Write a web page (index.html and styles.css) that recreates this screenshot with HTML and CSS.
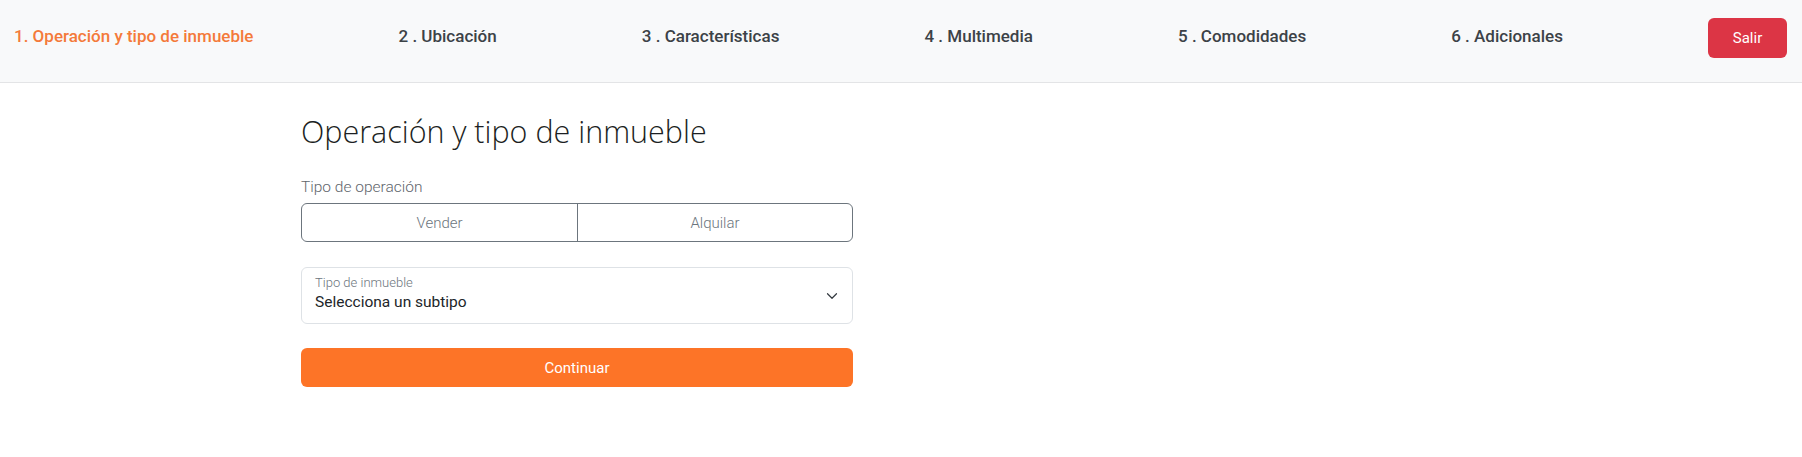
FILE: index.html
```html
<!DOCTYPE html>
<html lang="es">
<head>
<meta charset="utf-8">
<title>Publicar inmueble</title>
<link rel="stylesheet" href="styles.css">
</head>
<body>
<header class="steps">
  <span class="step active">1. Operación y tipo de inmueble</span>
  <span class="step">2 . Ubicación</span>
  <span class="step">3 . Características</span>
  <span class="step">4 . Multimedia</span>
  <span class="step">5 . Comodidades</span>
  <span class="step">6 . Adicionales</span>
  <button class="exit">Salir</button>
</header>
<main class="content">
  <h1 class="title">Operación y tipo de inmueble</h1>
  <div class="field-label">Tipo de operación</div>
  <div class="toggle">
    <span class="toggle-opt">Vender</span>
    <span class="toggle-opt">Alquilar</span>
  </div>
  <div class="select">
    <div class="select-text">
      <span class="select-label">Tipo de inmueble</span>
      <span class="select-value">Selecciona un subtipo</span>
    </div>
    <svg class="chevron" width="16" height="12" viewBox="0 0 16 16"><path d="m2 5 6 6 6-6" fill="none" stroke="#343a40" stroke-width="1.6" stroke-linecap="round" stroke-linejoin="round"/></svg>
  </div>
  <button class="continue">Continuar</button>
</main>
</body>
</html>
```
FILE: styles.css
```css
* { box-sizing: border-box; }
body {
  margin: 0;
  background: #fff;
  font-family: Roboto, "Liberation Sans", sans-serif;
  color: #212529;
}
.steps {
  height: 83px;
  background: #f8f9fa;
  border-bottom: 1px solid #e3e4e6;
  display: flex;
  align-items: center;
  justify-content: space-between;
  padding: 0 15px 10px 14px;
}
.step {
  font-size: 17px;
  font-weight: 500;
  color: #3c4247;
}
.step.active { color: #f47a3a; }
.exit {
  width: 79px;
  height: 40px;
  margin-top: 4px;
  border: none;
  border-radius: 6px;
  background: #dc3545;
  color: #fff;
  font-family: Roboto, sans-serif;
  font-size: 15px;
}
.content {
  width: 853px;
  padding: 30px 0 0 301px;
  display: flex;
  flex-direction: column;
}
.title {
  margin: 0;
  font-family: "Open Sans", sans-serif;
  font-weight: 300;
  font-size: 30.5px;
  line-height: 36px;
  color: #1c1f23;
}
.field-label {
  margin-top: 27px;
  font-size: 15.5px;
  line-height: 22px;
  font-weight: 300;
  color: #5f666c;
}
.toggle {
  margin-top: 5px;
  height: 39px;
  display: grid;
  grid-template-columns: 1fr 1fr;
  border: 1px solid #6c757d;
  border-radius: 6px;
}
.toggle-opt {
  display: flex;
  align-items: center;
  justify-content: center;
  font-size: 15px;
  font-weight: 300;
  color: #6c757d;
}
.toggle-opt + .toggle-opt { border-left: 1px solid #6c757d; }
.select {
  margin-top: 25px;
  height: 57px;
  border: 1px solid #dee2e6;
  border-radius: 6px;
  display: flex;
  align-items: center;
  justify-content: space-between;
  padding: 0 12px 0 13px;
}
.select-text {
  display: flex;
  flex-direction: column;
  padding-bottom: 3px;
}
.select-label {
  font-size: 13px;
  line-height: 16px;
  font-weight: 300;
  color: #6c757d;
}
.select-value {
  font-size: 15.5px;
  line-height: 22px;
  color: #212529;
}
.continue {
  margin-top: 24px;
  height: 39px;
  border: none;
  border-radius: 6px;
  background: #fd7427;
  color: #fff;
  font-family: Roboto, sans-serif;
  font-size: 15px;
}
```
